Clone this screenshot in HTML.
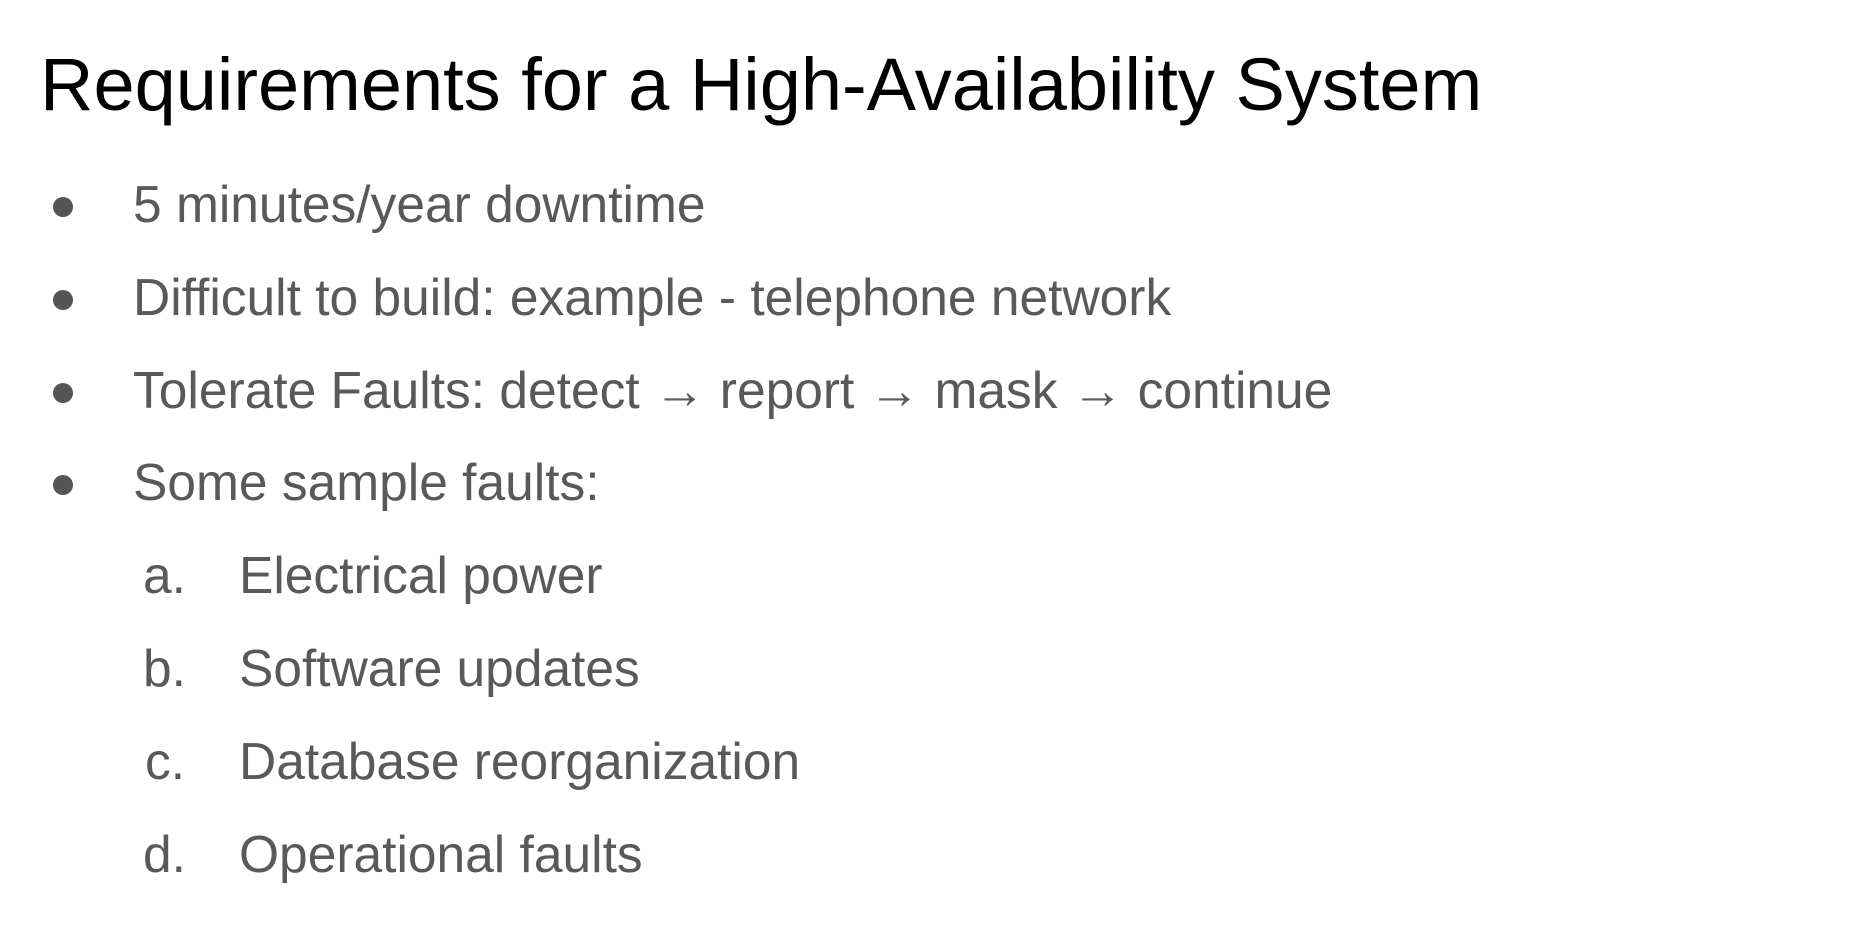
<!DOCTYPE html>
<html><head><meta charset="utf-8"><style>
html,body{margin:0;padding:0;background:#fff;}
body{width:1864px;height:928px;position:relative;overflow:hidden;font-family:"Liberation Sans",Arial,sans-serif;}
.t{position:absolute;white-space:nowrap;line-height:1;}
.title{left:40px;top:48px;font-size:74px;color:#000;}
.b{font-size:51.5px;color:#595959;}
.dot{position:absolute;width:20px;height:20px;border-radius:50%;background:#555;}
</style></head><body>
<div class="t title">Requirements for a High-Availability System</div>

<div class="dot" style="left:53px;top:197px"></div>
<div class="t b" style="left:133px;top:179px">5 minutes/year downtime</div>
<div class="dot" style="left:53px;top:290px"></div>
<div class="t b" style="left:133px;top:272px">Difficult to build: example - telephone network</div>
<div class="dot" style="left:53px;top:383px"></div>
<div class="t b" style="left:133px;top:365px">Tolerate Faults: detect → report → mask → continue</div>
<div class="dot" style="left:53px;top:475px"></div>
<div class="t b" style="left:133px;top:457px">Some sample faults:</div>

<div class="t b" style="left:143px;top:550px">a.</div>
<div class="t b" style="left:239px;top:550px">Electrical power</div>
<div class="t b" style="left:143px;top:643px">b.</div>
<div class="t b" style="left:239px;top:643px">Software updates</div>
<div class="t b" style="left:145px;top:736px">c.</div>
<div class="t b" style="left:239px;top:736px">Database reorganization</div>
<div class="t b" style="left:143px;top:829px">d.</div>
<div class="t b" style="left:239px;top:829px">Operational faults</div>
</body></html>
